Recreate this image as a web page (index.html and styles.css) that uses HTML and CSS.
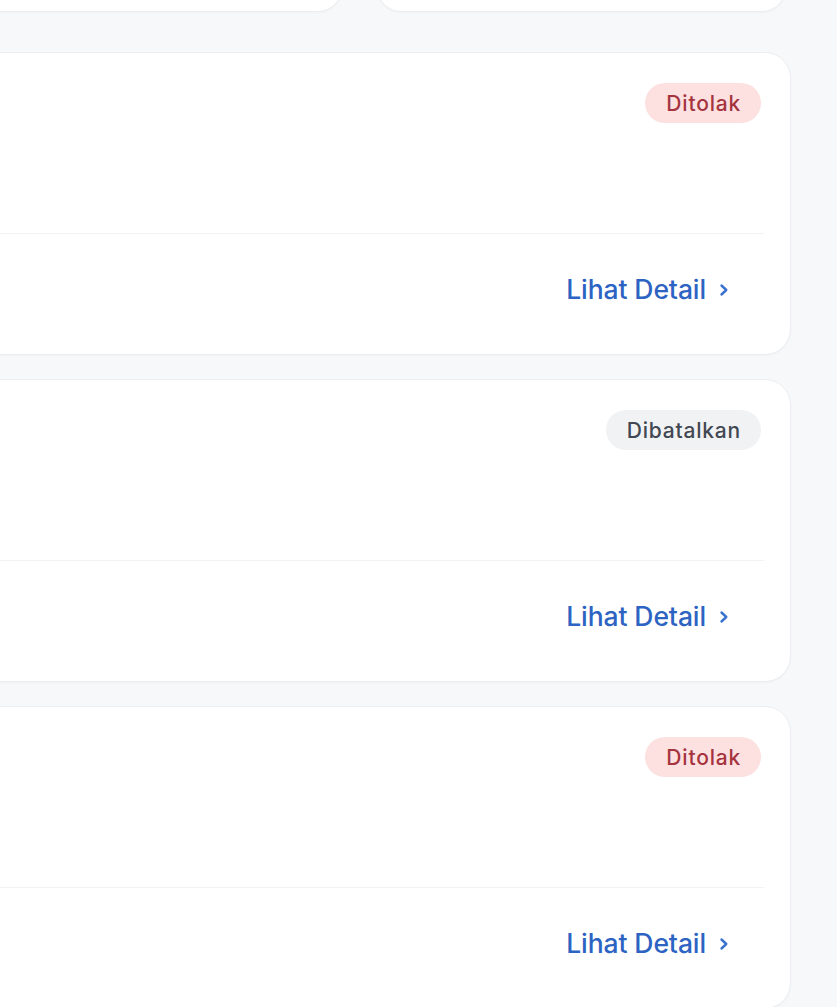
FILE: index.html
```html
<!DOCTYPE html>
<html lang="id">
<head>
<meta charset="utf-8">
<title>Pengajuan</title>
<link rel="stylesheet" href="styles.css">
</head>
<body>
<div class="page">
  <div class="summary">
    <div class="summary-card"></div>
    <div class="summary-card"></div>
  </div>
  <div class="list">
    <article class="card">
      <div class="card-head"><span class="badge badge-rejected">Ditolak</span></div>
      <div class="card-body"></div>
      <div class="card-foot">
        <a class="detail-link" href="#">Lihat Detail
          <svg class="chev" viewBox="0 0 12 14" width="12" height="14"><path d="M3.5 2.5 8.3 7 3.5 11.5" fill="none" stroke="currentColor" stroke-width="2.4" stroke-linecap="round" stroke-linejoin="round"/></svg>
        </a>
      </div>
    </article>
    <article class="card">
      <div class="card-head"><span class="badge badge-cancelled">Dibatalkan</span></div>
      <div class="card-body"></div>
      <div class="card-foot">
        <a class="detail-link" href="#">Lihat Detail
          <svg class="chev" viewBox="0 0 12 14" width="12" height="14"><path d="M3.5 2.5 8.3 7 3.5 11.5" fill="none" stroke="currentColor" stroke-width="2.4" stroke-linecap="round" stroke-linejoin="round"/></svg>
        </a>
      </div>
    </article>
    <article class="card">
      <div class="card-head"><span class="badge badge-rejected">Ditolak</span></div>
      <div class="card-body"></div>
      <div class="card-foot">
        <a class="detail-link" href="#">Lihat Detail
          <svg class="chev" viewBox="0 0 12 14" width="12" height="14"><path d="M3.5 2.5 8.3 7 3.5 11.5" fill="none" stroke="currentColor" stroke-width="2.4" stroke-linecap="round" stroke-linejoin="round"/></svg>
        </a>
      </div>
    </article>
  </div>
</div>
</body>
</html>
```
FILE: styles.css
```css
html, body {
  margin: 0;
  padding: 0;
  background: #f7f8fa;
  overflow: hidden;
  font-family: Inter, "Noto Sans", "Liberation Sans", sans-serif;
}

.page {
  margin-left: -400px;
  margin-right: 46px;
}

.summary {
  display: grid;
  grid-template-columns: 742px 409px;
  column-gap: 35px;
  margin-top: -100px;
}

.summary-card {
  height: 112px;
  background: #ffffff;
  border: 1px solid #eceef1;
  border-radius: 24px;
  box-sizing: border-box;
  box-shadow: 0 1px 2px rgba(16, 24, 40, 0.03);
}

.list {
  display: flex;
  flex-direction: column;
  gap: 24px;
  margin-top: 40px;
}

.card {
  background: #ffffff;
  border: 1px solid #eceef1;
  border-radius: 26px;
  box-sizing: border-box;
  height: 303px;
  padding: 30px 26px 0;
  display: flex;
  flex-direction: column;
  box-shadow: 0 1px 2px rgba(16, 24, 40, 0.03);
}

.card-head {
  display: flex;
  justify-content: flex-end;
  padding-right: 3px;
}

.badge {
  display: inline-flex;
  align-items: center;
  height: 40px;
  padding: 0 20px 0 21px;
  border-radius: 20px;
  font-size: 21px;
  font-weight: 500;
  letter-spacing: 0.8px;
}

.badge-rejected {
  background: #fde1e1;
  color: #a5343e;
}

.badge-cancelled {
  background: #f1f2f4;
  color: #424852;
}

.card-body {
  height: 110px;
}

.card-foot {
  border-top: 1px solid #f1f3f5;
  padding: 40px 34px 0 0;
  display: flex;
  justify-content: flex-end;
}

.detail-link {
  display: inline-flex;
  align-items: center;
  gap: 12px;
  height: 30px;
  color: #2d63c2;
  font-size: 26.5px;
  font-weight: 500;
  text-decoration: none;
  letter-spacing: -0.1px;
}

.chev {
  color: #3a72cf;
  margin-top: 1px;
}
```
